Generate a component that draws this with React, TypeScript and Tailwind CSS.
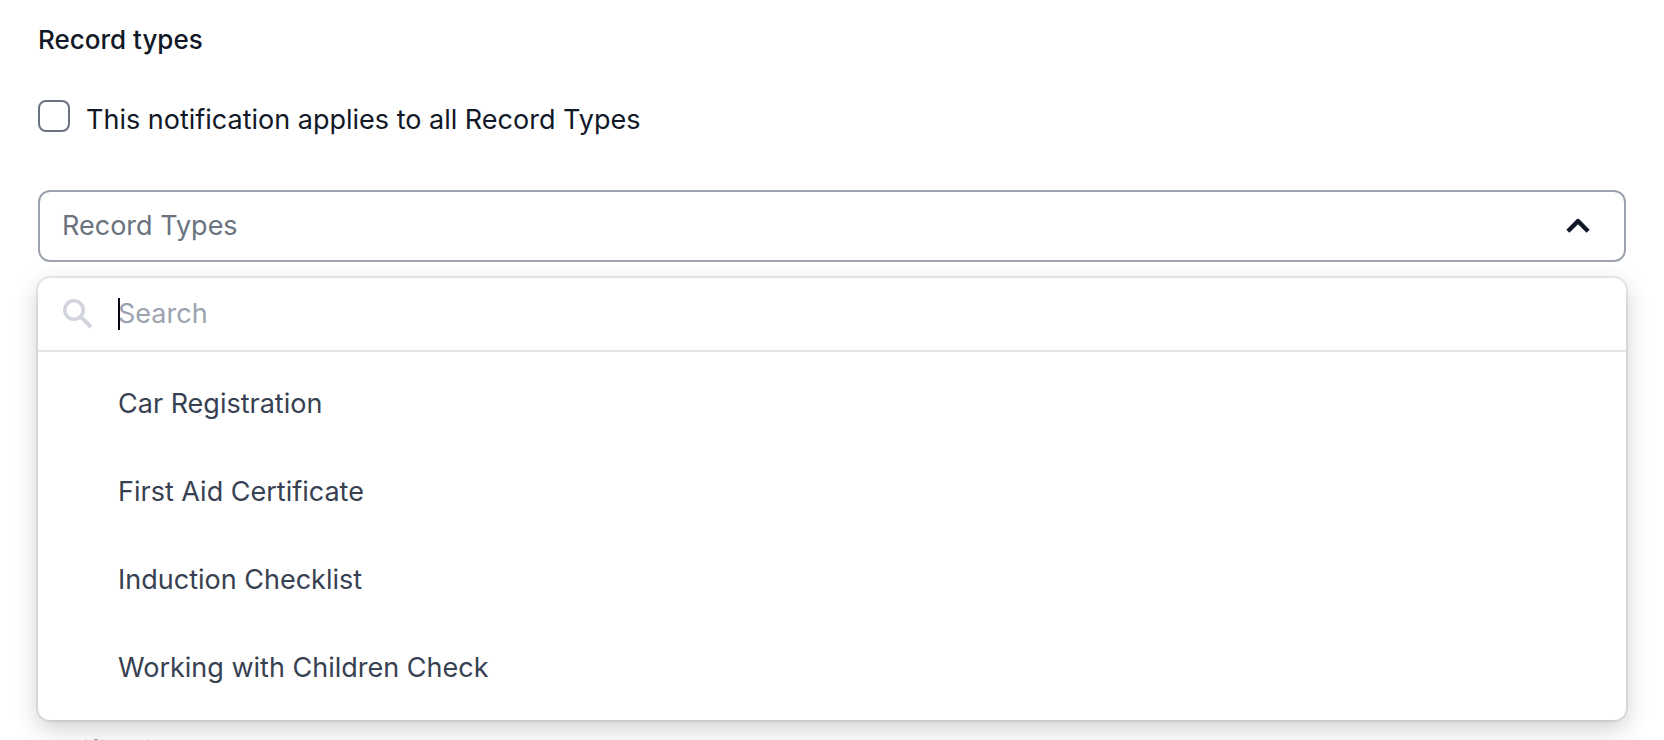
import { useState } from 'react';

const recordTypes = [
  'Car Registration',
  'First Aid Certificate',
  'Induction Checklist',
  'Working with Children Check',
];

function ChevronUpIcon() {
  return (
    <svg width="24" height="16" viewBox="0 0 24 16" fill="none" aria-hidden="true">
      <path d="M1.9 13.2 12 3.1l10.1 10.1" stroke="currentColor" strokeWidth="4.4" strokeLinejoin="round" />
    </svg>
  );
}

function SearchIcon() {
  return (
    <svg width="30" height="30" viewBox="0 0 30 30" fill="none" aria-hidden="true">
      <circle cx="11" cy="11" r="9.2" stroke="currentColor" strokeWidth="3.6" />
      <path d="m18 18 10 10" stroke="currentColor" strokeWidth="4" />
    </svg>
  );
}

/**
 * RecordTypeSelect — Dropdown with a search box above its options.
 */
function RecordTypeSelect() {
  const [open, setOpen] = useState(true);
  const [query, setQuery] = useState('');
  const [selected, setSelected] = useState('');

  const matches = recordTypes.filter((type) => type.toLowerCase().includes(query.toLowerCase()));

  return (
    <div className="relative mt-[50px]">
      <button
        type="button"
        aria-haspopup="listbox"
        aria-expanded={open}
        onClick={() => setOpen(!open)}
        className="flex h-18 w-full items-center justify-between rounded-xl border-2 border-[#9ca3af] bg-white pl-[22px] pr-[34px] text-[#6b7280]"
      >
        <span>{selected || 'Record Types'}</span>
        <span className={open ? 'text-[#111827]' : 'rotate-180 text-[#111827]'}>
          <ChevronUpIcon />
        </span>
      </button>

      {open && (
        <div className="absolute inset-x-0 top-full z-10 mt-4 rounded-xl bg-white shadow-[0_0_0_2px_rgba(0,0,0,0.07),0_8px_24px_rgba(0,0,0,0.2)]">
          <label className="flex h-[74px] items-center gap-[25px] border-b-2 border-[#e5e5e5] px-[25px] text-[#d1d5db]">
            <SearchIcon />
            <span className="relative flex flex-1 items-center">
              <input
                type="text"
                autoFocus
                aria-label="Search record types"
                placeholder="Search"
                value={query}
                onChange={(e) => setQuery(e.target.value)}
                className="min-w-0 flex-1 text-[#111827] outline-none placeholder:text-[#9ca3af]"
              />
              {/* Two pixel caret while the box is empty */}
              {!query && <span className="absolute left-0 h-8 w-0.5 bg-[#030712]" />}
            </span>
          </label>
          <ul role="listbox" aria-label="Record types" className="py-2">
            {matches.map((type) => (
              <li key={type} role="option" aria-selected={type === selected}>
                <button
                  type="button"
                  onClick={() => {
                    setSelected(type);
                    setOpen(false);
                  }}
                  className="flex h-22 w-full items-center px-20 text-left text-[#374151]"
                >
                  {type}
                </button>
              </li>
            ))}
          </ul>
        </div>
      )}
    </div>
  );
}

export default function App() {
  return (
    <main className="h-screen overflow-hidden bg-white px-[38px] pt-5 font-['Inter','Liberation_Sans',sans-serif] text-[27px] leading-10 text-[#111827]">
      <h2 className="text-[26px] leading-10 font-medium">Record types</h2>

      <div className="mt-10 flex items-start gap-4">
        <input
          id="all-record-types"
          type="checkbox"
          className="size-8 appearance-none rounded-lg border-2 border-[#6b7280] bg-white checked:bg-[#111827]"
        />
        <label htmlFor="all-record-types">This notification applies to all Record Types</label>
      </div>

      <RecordTypeSelect />

      <h2 className="mt-[469px] text-[26px] leading-10 font-medium">Notification email</h2>
    </main>
  );
}
